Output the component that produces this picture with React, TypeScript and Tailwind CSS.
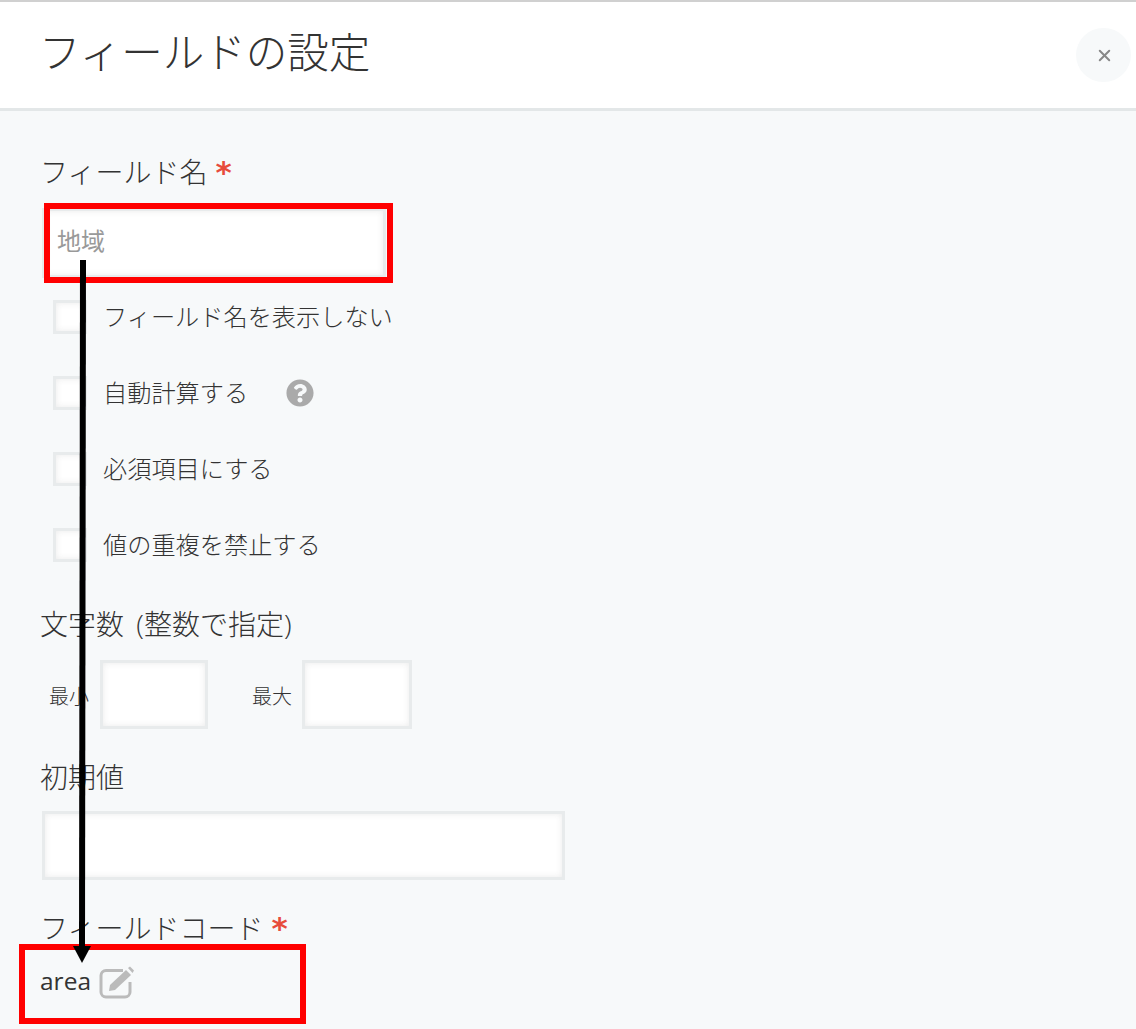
import { X } from 'lucide-react';
import { FaQuestionCircle } from 'react-icons/fa';

const FONT = "font-['Open_Sans','Noto_Sans_CJK_JP',sans-serif]";

function Required() {
  return <span className="ml-[8px] text-[#e74c3c] text-[31px] leading-[30px] font-bold font-['DejaVu_Sans',sans-serif]">*</span>;
}

function Box({ className }: { className: string }) {
  return <div className={`bg-white border-[3px] border-[#e8ebec] shadow-[inset_0_0_6px_rgba(55,58,60,0.1)] ${className}`} />;
}

function CheckRow({ label, children }: { label: string; children?: React.ReactNode }) {
  return (
    <div className="flex items-center h-[34px] mb-[42px] ml-[11px]">
      <Box className="w-[34px] h-[34px] shrink-0" />
      <span className="ml-[16px] text-[24.2px] leading-[34px] font-light text-[#333] whitespace-nowrap">{label}</span>
      {children}
    </div>
  );
}

function EditIcon() {
  return (
    <svg width="36" height="34" viewBox="0 0 36 34" className="ml-[8px] mt-[2px]">
      <path d="M24 5.5 H7 a5 5 0 0 0 -5 5 V27 a5 5 0 0 0 5 5 H26 a5 5 0 0 0 5 -5 V17" fill="none" stroke="#bbbbbb" strokeWidth="3" />
      <path d="M10 26 L11 20 L27 5 L32 10 L16 25 Z" fill="#bbbbbb" />
      <path d="M29 3 L31 1.5 L35 5.5 L33.5 8 Z" fill="#bbbbbb" />
    </svg>
  );
}

export default function App() {
  return (
    <div className={`relative w-[1136px] h-[1029px] overflow-hidden bg-[#f7f9fa] ${FONT}`}>
      <header className="h-[111px] bg-white border-t-2 border-t-[#d0d0d0] border-b-[3px] border-b-[#e3e7e8] flex items-center justify-between pl-[39px] pr-[5px]">
        <h1 className="text-[41.5px] leading-[56px] font-light text-[#333] whitespace-nowrap -mt-[6px]">フィールドの設定</h1>
        <button className="w-[55px] h-[54px] rounded-full bg-[#f7f9fa] flex items-center justify-center text-[#888]">
          <X size={19} strokeWidth={2.5} className="ml-[1px]" />
        </button>
      </header>

      <main className="pl-[42px] text-[#333]">
        <div className="flex items-center h-[40px] mt-[41px] -ml-[2px] text-[28px] font-light whitespace-nowrap">フィールド名<Required /></div>

        <div className="mt-[16px] mb-[22px] w-[344px] h-[70px] bg-white border-[3px] border-[#e8ebec] shadow-[inset_0_0_6px_rgba(55,58,60,0.1)] flex items-center pl-[12px] pb-[4px] text-[24px] text-[#999]">
          地域
        </div>

        <CheckRow label="フィールド名を表示しない" />
        <CheckRow label="自動計算する">
          <FaQuestionCircle size={28} color="#aaaaaa" className="ml-[38px]" />
        </CheckRow>
        <CheckRow label="必須項目にする" />
        <CheckRow label="値の重複を禁止する" />

        <div className="mt-[2px] h-[40px] -ml-[2px] flex items-center text-[28px] font-light whitespace-pre [word-spacing:5px]">文字数 (整数で指定)</div>

        <div className="mt-[16px] h-[69px] flex items-center">
          <span className="ml-[7px] pt-[4px] w-[51px] text-[20px] font-light whitespace-nowrap">最小</span>
          <Box className="w-[108px] h-[69px]" />
          <span className="ml-[44px] pt-[4px] w-[50px] text-[20px] font-light whitespace-nowrap">最大</span>
          <Box className="w-[110px] h-[69px]" />
        </div>

        <div className="mt-[28px] h-[40px] -ml-[2px] flex items-center text-[28px] font-light whitespace-nowrap">初期値</div>

        <Box className="mt-[14px] w-[523px] h-[69px]" />

        <div className="mt-[28px] h-[40px] -ml-[2px] flex items-center text-[28px] font-light whitespace-nowrap">フィールドコード<Required /></div>

        <div className="-ml-[2px] mt-[13px] flex items-center h-[40px]">
          <span className="text-[24.5px] text-[#333]">area</span>
          <EditIcon />
        </div>
      </main>

      {/* annotations on top of the screenshot */}
      <div className="absolute left-[44px] top-[203px] w-[349px] h-[80px] border-[6px] border-[#ff0000]" />
      <div className="absolute left-[19px] top-[944px] w-[287px] h-[80px] border-[6px] border-[#ff0000]" />
      <svg className="absolute left-[70px] top-[260px]" width="26" height="706" viewBox="0 0 26 706">
        <path d="M13 0 L12 690" stroke="#000" strokeWidth="6" fill="none" />
        <path d="M3 686 H21 L12 703 Z" fill="#000" />
      </svg>
    </div>
  );
}
